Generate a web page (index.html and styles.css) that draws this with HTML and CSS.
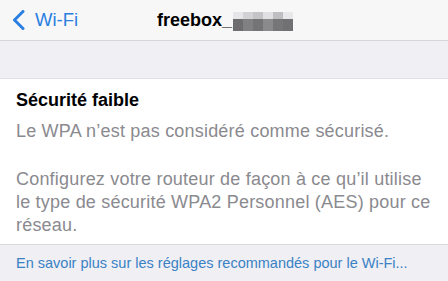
FILE: index.html
```html
<!DOCTYPE html>
<html lang="fr">
<head>
<meta charset="utf-8">
<link rel="stylesheet" href="styles.css">
</head>
<body>
<div class="nav">
  <div class="back">
    <svg class="chev" width="13" height="20" viewBox="0 0 13 20"><path d="M11 1.5 L2.5 10 L11 18.5" fill="none" stroke="#2a7fe0" stroke-width="3" stroke-linecap="round" stroke-linejoin="round"/></svg>
    <span>Wi-Fi</span>
  </div>
  <div class="title">freebox_<span class="mosaic"><i class="t1"></i><i class="t2"></i><i class="t3"></i><i class="t4"></i><i class="t5"></i><i class="t6"></i><i class="b1"></i><i class="b2"></i><i class="b3"></i><i class="b4"></i><i class="b5"></i><i class="b6"></i></span></div>
</div>
<div class="gap"></div>
<div class="card">
  <div class="heading">Sécurité faible</div>
  <p class="txt">Le WPA n’est pas considéré comme sécurisé.</p>
  <p class="txt">Configurez votre routeur de façon à ce qu’il utilise le type de sécurité WPA2 Personnel (AES) pour ce réseau.</p>
</div>
<div class="footer">En savoir plus sur les réglages recommandés pour le Wi-Fi...</div>
</body>
</html>
```
FILE: styles.css
```css
html, body { margin: 0; padding: 0; }
body {
  width: 448px; height: 281px; overflow: hidden;
  background: #efeff4;
  font-family: "Liberation Sans", Arial, sans-serif;
}
.nav {
  height: 40px;
  background: #f7f7f8;
  border-bottom: 1px solid #d6d6da;
  position: relative;
  display: flex; align-items: center;
}
.back {
  display: flex; align-items: center;
  padding-left: 12px;
  color: #2a7fe0;
  font-size: 18.5px;
}
.back span { margin-left: 10px; }
.title {
  position: absolute; left: 157px; top: 0; height: 40px;
  display: flex; align-items: center;
  font-size: 18px; font-weight: bold; color: #000;
}
.mosaic {
  display: inline-grid;
  grid-template-columns: repeat(6, 10px);
  grid-template-rows: 7px 12px;
  width: 60px; margin-left: 1px; margin-top: 2px;
}
.mosaic i { display: block; }
.t1 { background: #e6e6e8; }
.t2 { background: #d2d2d4; }
.t3 { background: #c4c4c6; }
.t4 { background: #e0e0e2; }
.t5 { background: #bfbfc1; }
.t6 { background: #e8e8ea; }
.b1 { background: #6d6d6f; }
.b2 { background: #808082; }
.b3 { background: #747476; }
.b4 { background: #8a8a8c; }
.b5 { background: #767678; }
.b6 { background: #717173; }
.gap { height: 37px; }
.card {
  background: #fff;
  border-top: 1px solid #e2e2e6;
  border-bottom: 1px solid #d9d9dd;
  padding: 9px 16px 7px 16px;
}
.heading {
  font-size: 18px; font-weight: bold; color: #000;
  line-height: 24px;
}
.txt {
  margin: 8px 0 0 0;
  font-size: 18px; letter-spacing: 0.2px; line-height: 23px; color: #8a8a8f;
}
.txt + .txt { margin-top: 25px; }
.footer {
  padding: 9px 16px 0 16px;
  font-size: 14.5px; line-height: 18px; color: #3a82c4;
}
```
